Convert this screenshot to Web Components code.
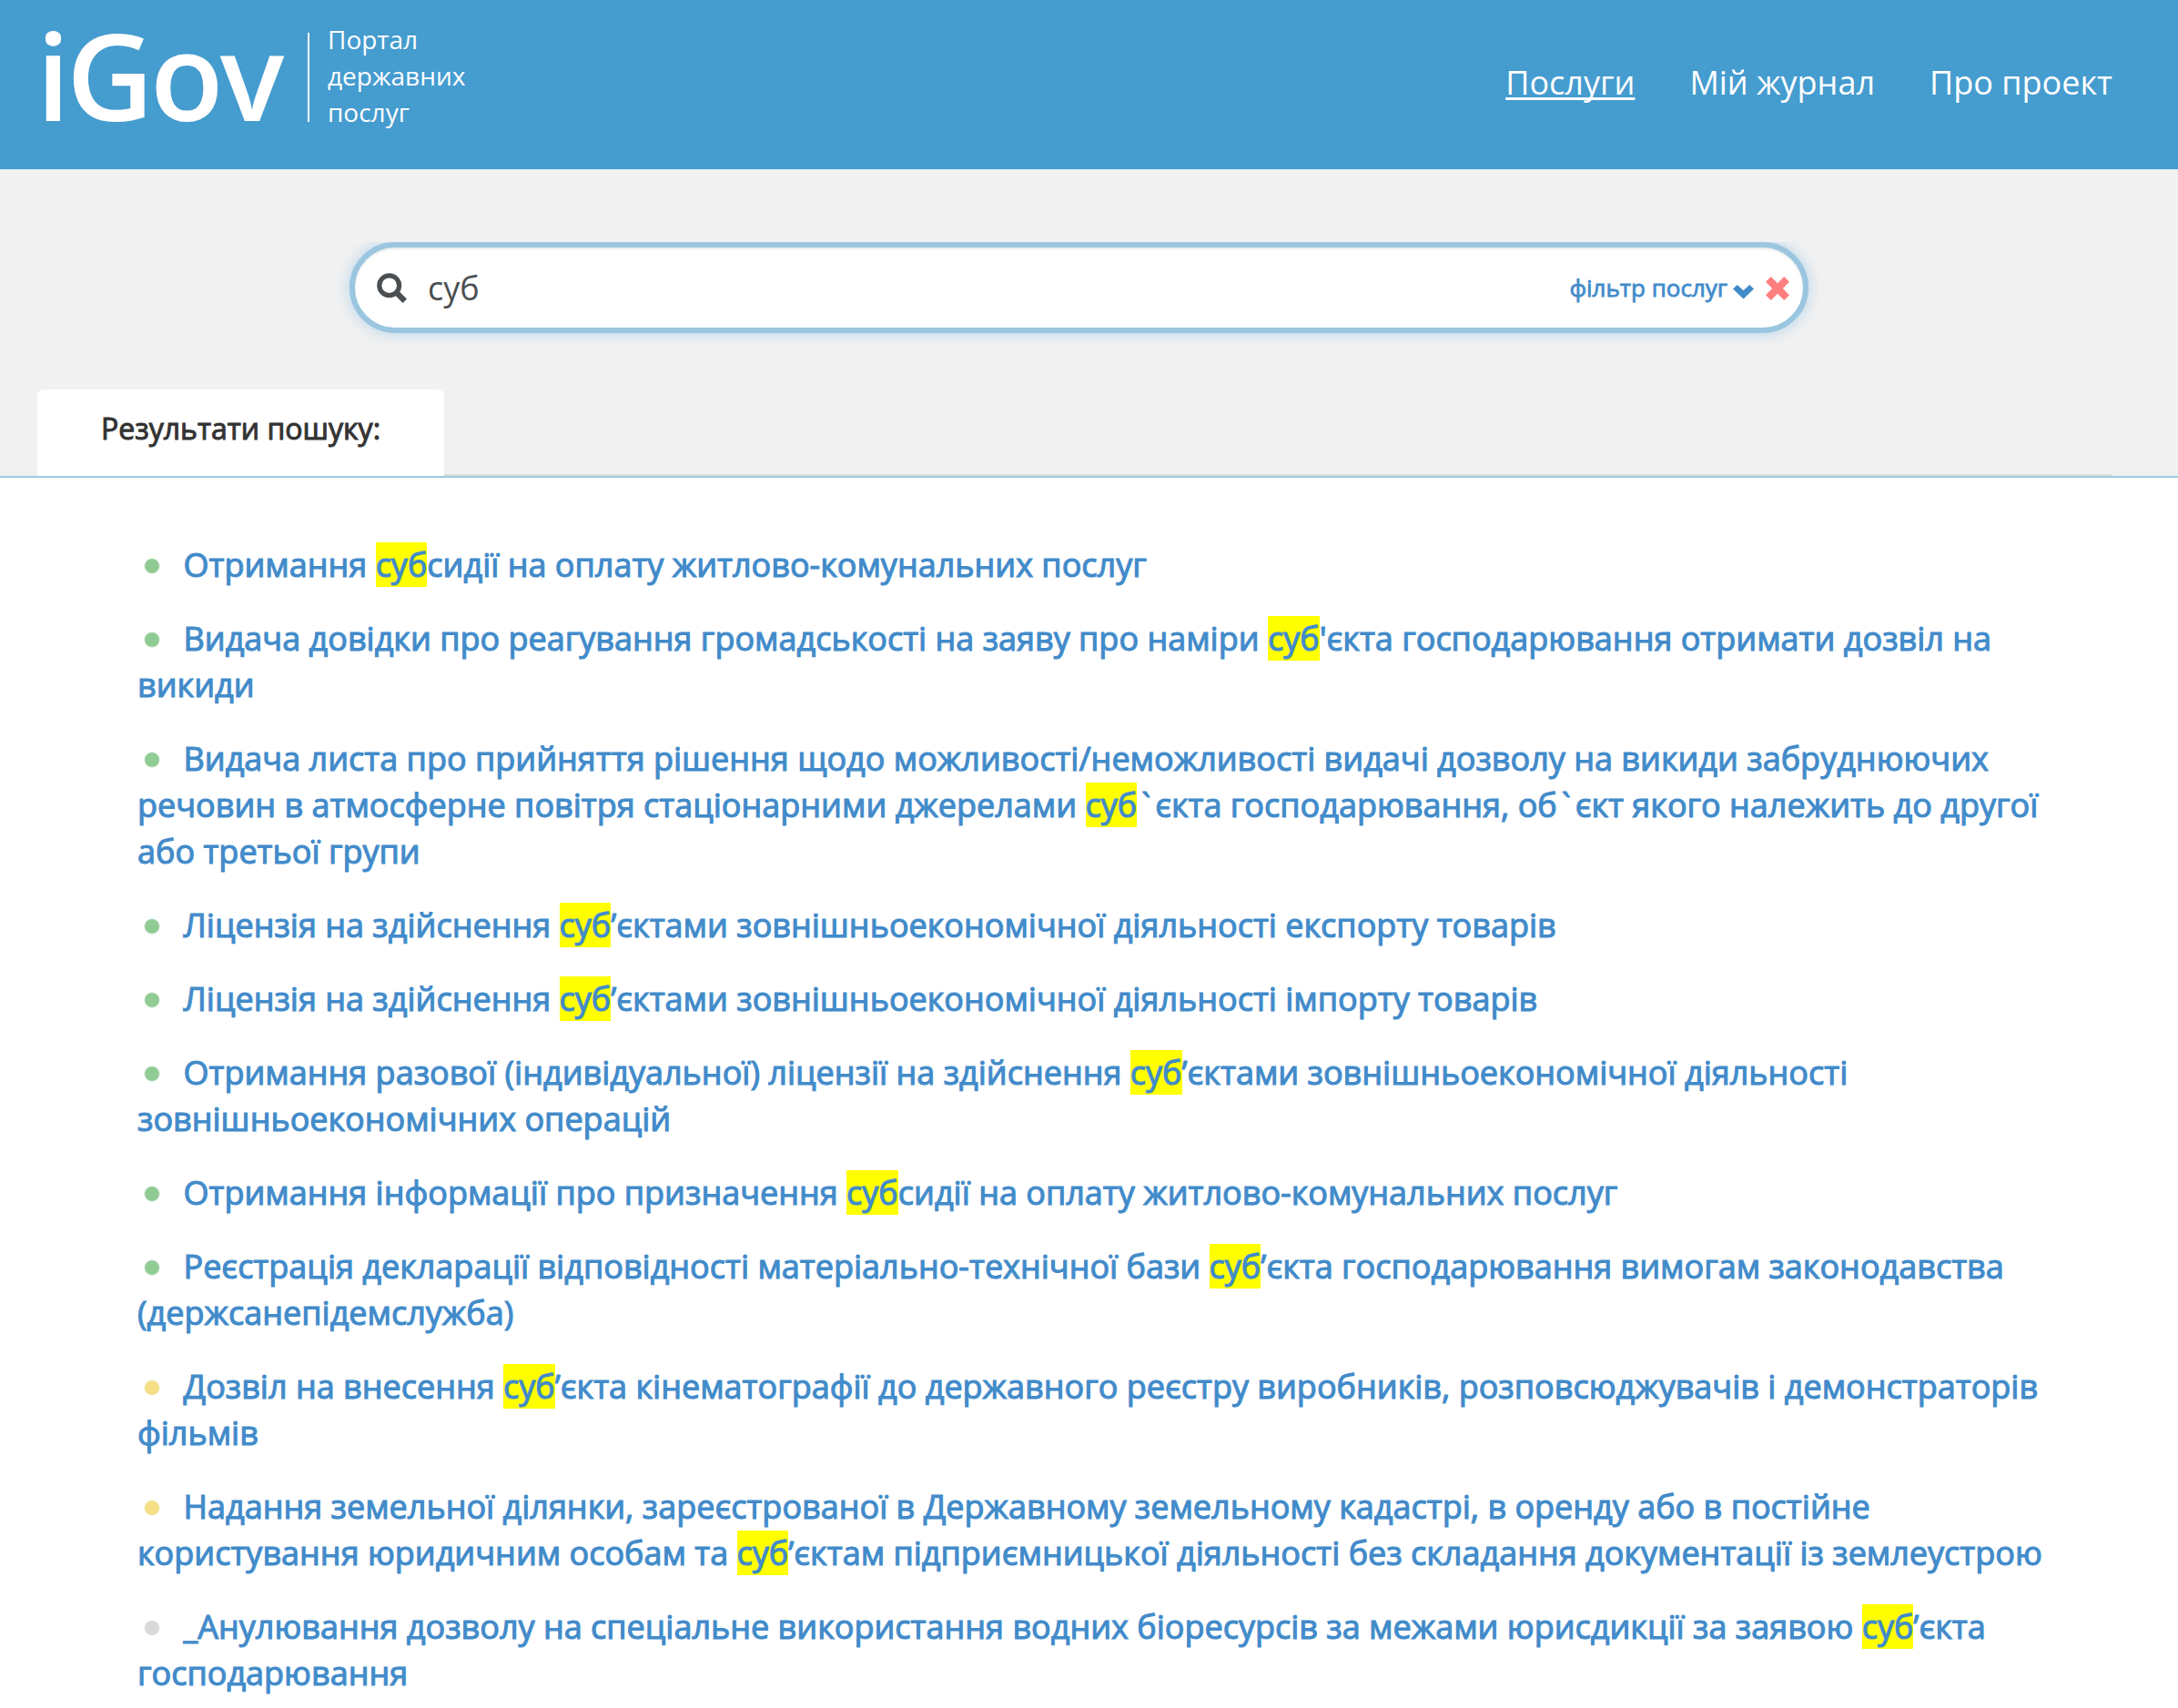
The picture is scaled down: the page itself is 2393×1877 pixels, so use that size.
<!DOCTYPE html>
<html lang="uk">
<head>
<meta charset="utf-8">
<title>iGov</title>
<style>
html,body{margin:0;background:#fff}
body{font-family:"Open Sans","Noto Sans",sans-serif;font-weight:400;color:#333;width:2393px;height:1877px;overflow:hidden}
</style>
</head>
<body>
<igov-page></igov-page>
<script>
const define = (name, html) => {
  const t = document.createElement('template');
  t.innerHTML = html;
  customElements.define(name, class extends HTMLElement {
    constructor() {
      super();
      this.attachShadow({mode: 'open'}).appendChild(t.content.cloneNode(true));
    }
  });
};

define('igov-logo', `<style>
:host{display:flex;color:#fff;height:150px}
.name{box-sizing:border-box;padding-left:2px;font-size:132px;line-height:150px;font-weight:600;letter-spacing:-3.8px;width:300px;margin-top:7px;white-space:nowrap}
.tag{margin-top:36px;height:98px;border-left:2px solid #fff;padding-left:20px;font-size:28px;line-height:40px}
.tag div{margin-top:-13px;white-space:pre}
</style><div class="name">iGov</div><div class="tag"><div>Портал
державних
послуг</div></div>`);

define('igov-nav-link', `<style>
:host{display:block;font-size:36px;line-height:50px;color:#fff;white-space:nowrap}
:host([active]){text-decoration:underline;text-decoration-thickness:3px;text-underline-offset:3px;text-decoration-skip-ink:none}
</style><slot></slot>`);

define('igov-header', `<style>
:host{display:flex;justify-content:space-between;height:186px;background:#459ccf;padding:0 72px 0 38px;box-sizing:border-box}
nav{display:flex;gap:60px;margin-top:66px}
</style><igov-logo></igov-logo><nav>
<igov-nav-link active>Послуги</igov-nav-link><igov-nav-link>Мій журнал</igov-nav-link><igov-nav-link>Про проект</igov-nav-link></nav>`);

define('igov-search', `<style>
:host{display:block;padding:0 30px 30px;clip-path:inset(0)}
.box{box-sizing:border-box;width:1603px;height:100px;border:6px solid #9ac6df;border-radius:50px;background:#fff;display:flex;align-items:center;padding:2px 15px 0 24px;
box-shadow:inset 0 2px 2px rgba(0,0,0,.075),0 0 16px rgba(102,175,233,.45)}
svg{display:block;flex:none}
.q{font-size:36px;line-height:50px;color:#4b4f52;margin-left:22px;flex:1}
.f{font-size:26px;line-height:36px;color:#428bca;-webkit-text-stroke:.8px #428bca;margin:-2px 6px 0 0}
</style><div class="box">
<svg width="34" height="34" viewBox="0 0 34 34"><circle cx="13.7" cy="13.7" r="10.9" fill="none" stroke="#4b4f52" stroke-width="5.2"/><path d="M22 22L30.8 30.8" stroke="#4b4f52" stroke-width="6.2"/></svg>
<div class="q">суб</div><div class="f">фільтр послуг</div>
<svg width="23" height="16" viewBox="0 0 22 16" preserveAspectRatio="none" style="margin:8px 13px 0 0"><path fill="#428bca" d="M4.6 0L11 6.2L17.4 0L22 4.6L11 15.6L0 4.6Z"/></svg>
<svg width="26" height="26" viewBox="0 0 26 26"><path fill="#ff7f7f" d="M5.8 0L13 7.2L20.2 0L26 5.8L18.8 13L26 20.2L20.2 26L13 18.8L5.8 26L0 20.2L7.2 13L0 5.8Z"/></svg>
</div>`);

define('igov-tabs', `<style>
:host{display:flex;height:95px;padding:0 72px 0 41px;align-items:stretch}
.tab{width:447px;box-sizing:border-box;background:#fff;border-radius:7px 7px 0 0;font-size:32px;line-height:44px;padding:21px 0 0 70px;color:#333;-webkit-text-stroke:1px #333;white-space:nowrap}
.rest{flex:1;border-bottom:2px solid #ddd}
</style><div class="tab"><slot></slot></div><div class="rest"></div>`);

define('igov-hero', `<style>
:host{display:block;background:#f1f1f1;border-bottom:2px solid #9bcbdf;height:257px;padding-top:80px}
.s{margin-left:354px;height:162px}
</style><div class="s"><igov-search></igov-search></div><igov-tabs>Результати пошуку:</igov-tabs>`);

define('igov-service', `<style>
:host{display:block;font-size:36px;line-height:51px;color:#428bca;white-space:nowrap;-webkit-text-stroke:1.1px #428bca;--dot:#91cb94}
:host([state=yellow]){--dot:#f6df85}
:host([state=gray]){--dot:#d9d9db}
.dot{display:inline-block;width:18px;height:18px;border-radius:50%;background:radial-gradient(closest-side,var(--dot) 80%,transparent);margin:0 25.5px 0 7px;vertical-align:3px;line-height:0}
::slotted(mark){background:#ff0;color:inherit}
::slotted(i){font-style:normal;padding:0 5px}
</style><span class="dot"></span><slot></slot>`);

define('igov-page', `<style>
:host{display:block}
main{display:flex;flex-direction:column;gap:30px;padding:70px 0 0 151px}
</style><igov-header></igov-header><igov-hero></igov-hero><main>
<igov-service>Отримання <mark>суб</mark>сидії на оплату житлово-комунальних послуг</igov-service>
<igov-service>Видача довідки про реагування громадськості на заяву про наміри <mark>суб</mark>'єкта господарювання отримати дозвіл на<br>викиди</igov-service>
<igov-service>Видача листа про прийняття рішення щодо можливості/неможливості видачі дозволу на викиди забруднюючих<br>речовин в атмосферне повітря стаціонарними джерелами <mark>суб</mark><i>\`</i>єкта господарювання, об<i>\`</i>єкт якого належить до другої<br>або третьої групи</igov-service>
<igov-service>Ліцензія на здійснення <mark>суб</mark>’єктами зовнішньоекономічної діяльності експорту товарів</igov-service>
<igov-service>Ліцензія на здійснення <mark>суб</mark>’єктами зовнішньоекономічної діяльності імпорту товарів</igov-service>
<igov-service>Отримання разової (індивідуальної) ліцензії на здійснення <mark>суб</mark>’єктами зовнішньоекономічної діяльності<br>зовнішньоекономічних операцій</igov-service>
<igov-service>Отримання інформації про призначення <mark>суб</mark>сидії на оплату житлово-комунальних послуг</igov-service>
<igov-service>Реєстрація декларації відповідності матеріально-технічної бази <mark>суб</mark>’єкта господарювання вимогам законодавства<br>(держсанепідемслужба)</igov-service>
<igov-service state="yellow">Дозвіл на внесення <mark>суб</mark>’єкта кінематографії до державного реєстру виробників, розповсюджувачів і демонстраторів<br>фільмів</igov-service>
<igov-service state="yellow">Надання земельної ділянки, зареєстрованої в Державному земельному кадастрі, в оренду або в постійне<br>користування юридичним особам та <mark>суб</mark>’єктам підприємницької діяльності без складання документації із землеустрою</igov-service>
<igov-service state="gray">_Анулювання дозволу на спеціальне використання водних біоресурсів за межами юрисдикції за заявою <mark>суб</mark>’єкта<br>господарювання</igov-service>
</main>`);
</script>
</body>
</html>
